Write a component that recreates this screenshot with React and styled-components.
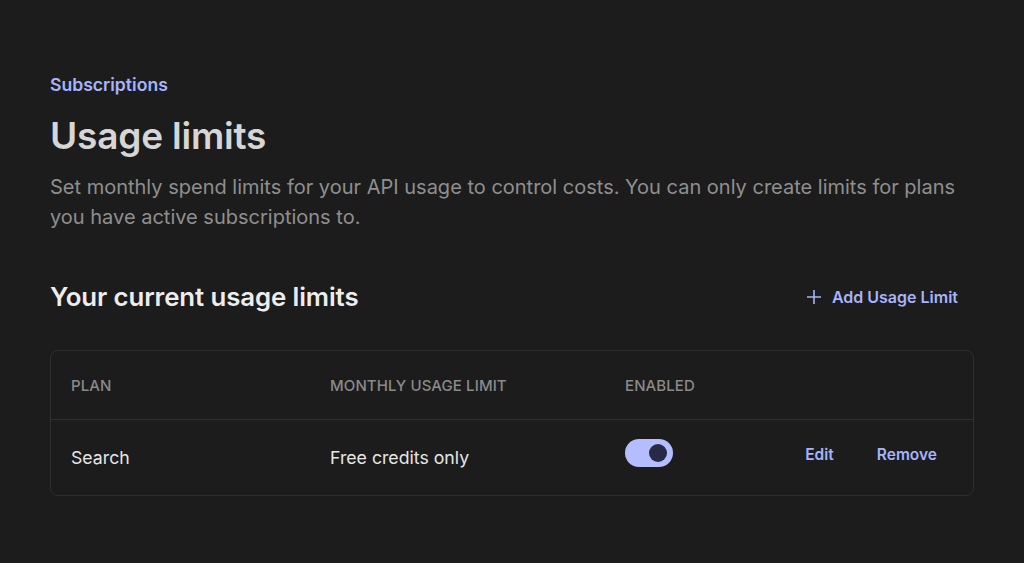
import React from 'react';
import styled, { createGlobalStyle } from 'styled-components';

const GlobalStyle = createGlobalStyle`
  html, body {
    margin: 0;
    background: #1c1c1c;
    font-family: Inter, "Noto Sans", sans-serif;
    -webkit-font-smoothing: antialiased;
  }
`;

const Page = styled.main`
  padding: 74px 50px 40px;
  max-width: 924px;
`;

const Eyebrow = styled.div`
  font-size: 17.6px;
  font-weight: 600;
  color: #a5b4fc;
  line-height: 22px;
`;

const Title = styled.h1`
  margin: 16px 0 0;
  font-size: 37px;
  font-weight: 600;
  letter-spacing: -0.2px;
  color: #d6d6d6;
  line-height: 48px;
`;

const Lead = styled.p`
  margin: 12px 0 0;
  font-size: 20px;
  line-height: 30px;
  color: #8f8f8f;
`;

const SectionHeader = styled.div`
  display: flex;
  align-items: center;
  justify-content: space-between;
  margin-top: 49px;
  padding-right: 16px;
`;

const SectionTitle = styled.h2`
  margin: 0;
  font-size: 25.8px;
  font-weight: 600;
  letter-spacing: -0.1px;
  color: #ededed;
  line-height: 32px;
`;

const LinkButton = styled.button`
  display: inline-flex;
  align-items: center;
  gap: ${(p) => (p.$gap ? p.$gap : 0)}px;
  background: none;
  border: 0;
  padding: 0;
  font-family: inherit;
  font-size: ${(p) => (p.$size ? p.$size : 15.5)}px;
  font-weight: 600;
  color: #a5b4fc;
  cursor: pointer;
`;

const Table = styled.div`
  margin-top: 37px;
  border: 1px solid #2f2f2f;
  border-radius: 8px;
`;

const Row = styled.div`
  display: grid;
  grid-template-columns: 259px 295px 1fr auto;
  align-items: center;
  height: ${(p) => p.$height}px;
  padding: 0 36px 0 20px;
  border-top: ${(p) => (p.$first ? 'none' : '1px solid #2f2f2f')};
`;

const HeadCell = styled.div`
  font-size: 15px;
  font-weight: 500;
  text-transform: uppercase;
  color: #8a8a8a;
  letter-spacing: 0.1px;
`;

const Cell = styled.div`
  font-size: 17.7px;
  color: #e6e6e6;
`;

const Actions = styled.div`
  display: flex;
  gap: 43px;
  margin-top: -6px;
`;

const Toggle = styled.span`
  position: relative;
  display: inline-block;
  width: 48px;
  height: 28px;
  border-radius: 14px;
  background: #b4bdfd;
  margin-top: -6px;
  &::after {
    content: '';
    position: absolute;
    top: 5px;
    right: 6px;
    width: 18px;
    height: 18px;
    border-radius: 50%;
    background: #262a48;
  }
`;

export default function App() {
  return (
    <>
      <GlobalStyle />
      <Page>
        <Eyebrow>Subscriptions</Eyebrow>
        <Title>Usage limits</Title>
        <Lead>
          Set monthly spend limits for your API usage to control costs. You can only create limits for plans
          you have active subscriptions to.
        </Lead>
        <SectionHeader>
          <SectionTitle>Your current usage limits</SectionTitle>
          <LinkButton $gap={10} $size={16}>
            <svg width="16" height="16" viewBox="0 0 16 16" fill="none" stroke="currentColor" strokeWidth="1.6">
              <path d="M8 1v14M1 8h14" />
            </svg>
            Add Usage Limit
          </LinkButton>
        </SectionHeader>
        <Table>
          <Row $first $height={68}>
            <HeadCell>Plan</HeadCell>
            <HeadCell>Monthly usage limit</HeadCell>
            <HeadCell>Enabled</HeadCell>
            <div />
          </Row>
          <Row $height={75}>
            <Cell>Search</Cell>
            <Cell>Free credits only</Cell>
            <div>
              <Toggle />
            </div>
            <Actions>
              <LinkButton>Edit</LinkButton>
              <LinkButton>Remove</LinkButton>
            </Actions>
          </Row>
        </Table>
      </Page>
    </>
  );
}
